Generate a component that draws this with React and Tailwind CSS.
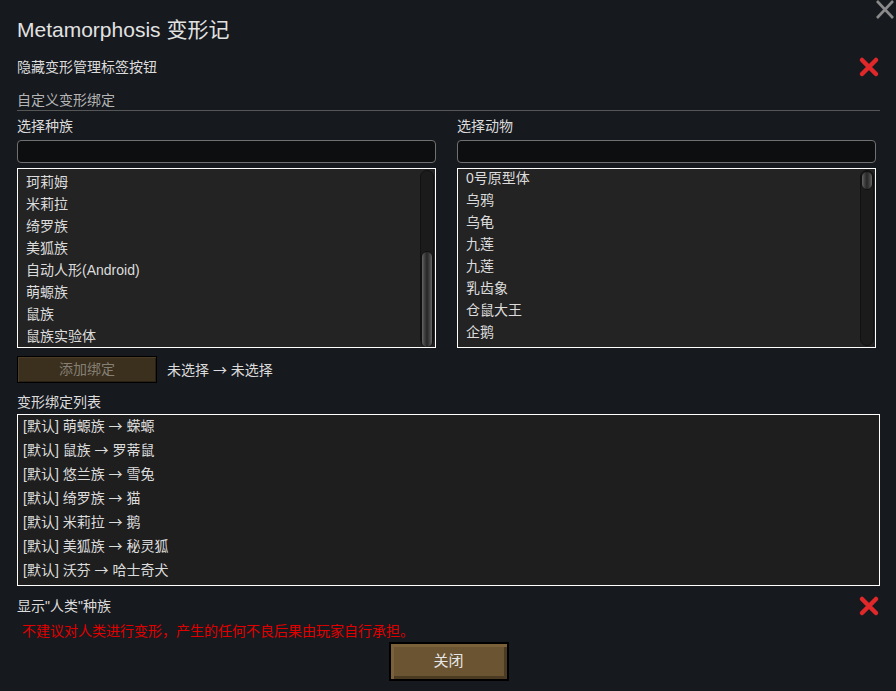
import React from 'react';

const races = ['珂莉姆', '米莉拉', '绮罗族', '美狐族', '自动人形(Android)', '萌螈族', '鼠族', '鼠族实验体'];
const animals = ['0号原型体', '乌鸦', '乌龟', '九莲', '九莲', '乳齿象', '仓鼠大王', '企鹅'];
const bindings = [
  ['萌螈族', '蝾螈'],
  ['鼠族', '罗蒂鼠'],
  ['悠兰族', '雪兔'],
  ['绮罗族', '猫'],
  ['米莉拉', '鹅'],
  ['美狐族', '秘灵狐'],
  ['沃芬', '哈士奇犬'],
];

const Arrow = () => <span className="font-['Noto_Sans_CJK_SC',sans-serif]">→</span>;

const RedX = () => (
  <svg width="22" height="22" viewBox="0 0 22 22" className="shrink-0">
    <path d="M4 4 L18 18 M18 4 L4 18" stroke="#e0282a" strokeWidth="4.5" strokeLinecap="round" />
  </svg>
);

// scrollbar drawn inside list boxes
const Scrollbar = ({ thumbTop, thumbHeight }) => (
  <div className="absolute right-[1px] top-[1px] bottom-[1px] w-[14px] rounded-full bg-[#1b1b1b] border border-[#111]">
    <div
      className="absolute left-0 right-0 rounded-full border border-[#111] bg-[linear-gradient(90deg,#666_0%,#444_22%,#262626_50%,#444_78%,#666_100%)]"
      style={{ top: thumbTop, height: thumbHeight }}
    />
  </div>
);

const ListBox = ({ items, offset, thumbTop, thumbHeight }) => (
  <div className="relative mt-[5px] h-[180px] border border-white bg-[#232323] overflow-hidden">
    <div className={offset}>
      {items.map((item, i) => (
        <div key={i} className="h-[22px] leading-[22px] pl-[8px] text-[14px] text-[#dcdcdc]">
          {item}
        </div>
      ))}
    </div>
    <Scrollbar thumbTop={thumbTop} thumbHeight={thumbHeight} />
  </div>
);

const Column = ({ label, children, className = '' }) => (
  <div className={`flex flex-col w-[419px] ${className}`}>
    <div className="mt-[5px] h-[20px] leading-[20px] text-[14px] text-[#dcdcdc]">{label}</div>
    <div className="mt-[4px] h-[23px] rounded-[4px] border border-[#707070] bg-[#0d0e10]" />
    {children}
  </div>
);

export default function App() {
  return (
    <div className="relative w-[896px] h-[691px] bg-[#16191e] overflow-hidden font-['Liberation_Sans','Noto_Sans_CJK_SC',sans-serif]">
      <svg width="20" height="20" viewBox="0 0 20 20" className="absolute right-[1px] top-0">
        <path d="M2 1 L18 18 M18 1 L2 18" stroke="#8a8a8a" strokeWidth="2.6" />
      </svg>

      <div className="flex flex-col pl-[17px] w-[880px]">
        <div className="mt-[18px] h-[24px] leading-[24px] text-[21px] text-[#e2e2e2]">Metamorphosis 变形记</div>

        <div className="mt-[14px] h-[22px] flex items-center justify-between">
          <span className="text-[14px] text-[#dcdcdc]">隐藏变形管理标签按钮</span>
          <RedX />
        </div>

        <div className="mt-[12px] h-[21px] leading-[20px] text-[14px] text-[#b5b5b5] border-b border-[#565656]">
          自定义变形绑定
        </div>

        <div className="flex">
          <Column label="选择种族">
            <ListBox items={races} offset="pt-[2px]" thumbTop={80} thumbHeight={97} />
          </Column>
          <Column label="选择动物" className="ml-[21px]">
            <ListBox items={animals} offset="-mt-[2px]" thumbTop={0} thumbHeight={19} />
          </Column>
        </div>

        <div className="mt-[8px] h-[27px] flex items-center">
          <div className="w-[140px] h-[27px] border border-black bg-[#3b2f1e] shadow-[inset_1px_1px_0_#4a3c27,inset_-1px_-1px_0_#2a2115] flex items-center justify-center text-[14px] text-[#858075]">
            添加绑定
          </div>
          <span className="ml-[10px] text-[14px] text-[#dcdcdc]">
            未选择 <Arrow /> 未选择
          </span>
        </div>

        <div className="mt-[9px] h-[20px] leading-[20px] text-[14px] text-[#dcdcdc]">变形绑定列表</div>
        <div className="mt-[2px] h-[172px] border border-white bg-[#1e1e1f] flex flex-col overflow-hidden">
          <div className="-mt-[2px]">
            {bindings.map(([a, b], i) => (
              <div key={i} className="h-[24px] leading-[24px] pl-[5px] text-[14px] text-[#dcdcdc]">
                [默认] {a} <Arrow /> {b}
              </div>
            ))}
          </div>
        </div>

        <div className="mt-[10px] h-[20px] flex items-center justify-between">
          <span className="text-[14px] text-[#dcdcdc]">显示"人类"种族</span>
          <RedX />
        </div>

        <div className="mt-[5px] h-[20px] leading-[20px] pl-[5px] text-[14px] text-[#e00000]">
          不建议对人类进行变形，产生的任何不良后果由玩家自行承担。
        </div>

        <div className="mt-[1px] self-center w-[120px] h-[39px] border-2 border-black bg-[#6a5432] shadow-[inset_3px_3px_0_#7a6139,inset_-3px_-3px_0_#4b3b22] flex items-center justify-center text-[15px] text-[#e6e6e6]">
          关闭
        </div>
      </div>
    </div>
  );
}
